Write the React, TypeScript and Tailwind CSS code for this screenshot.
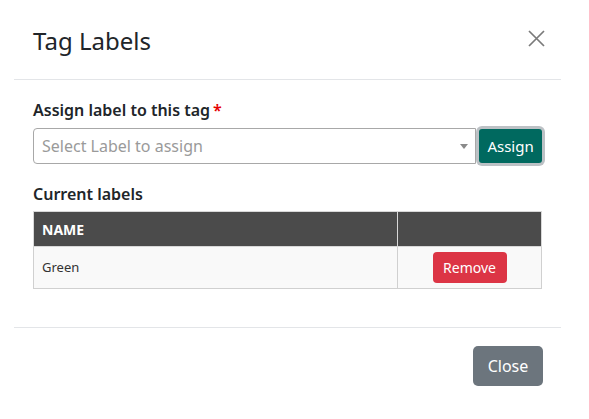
const labels = [{ name: "Green" }] as const;

export default function App() {
  return (
    <div className="h-[419px] w-full bg-white font-['Noto_Sans',_'Open_Sans',_sans-serif] text-[#212529]">
      <div className="ml-[14px] w-[547px] bg-white">
        {/* header */}
        <div className="flex h-[80px] items-center justify-between border-b border-[#e3e5e8] pl-[19px] pr-[16px] pt-[4px]">
          <h5 className="text-[24px] leading-[1.2] font-normal">Tag Labels</h5>
          <button className="mb-[7px] flex h-[18px] w-[18px] items-center justify-center">
            <svg width="17" height="17" viewBox="0 0 17 17">
              <path d="M1 1L16 16M16 1L1 16" stroke="#7a7a7a" strokeWidth="1.7" />
            </svg>
          </button>
        </div>

        {/* body */}
        <div className="px-[19px] pt-[18px] pb-[38px]">
          <p className="mb-[6px] text-[16px] leading-[24px] font-semibold">
            Assign label to this tag
            <span className="ml-[3px] text-[#e60000]">*</span>
          </p>
          <div className="flex items-center">
            <div className="flex h-[36px] w-[444px] items-center justify-between rounded-l-[4px] border border-[#a8a8a8] pl-[8px] pr-[6px]">
              <span className="text-[16px] text-[#9a9a9a]">Select Label to assign</span>
              <svg width="8" height="5" viewBox="0 0 8 5" className="mr-[1px]">
                <path d="M0 0h8L4 5z" fill="#8a8a8a" />
              </svg>
            </div>
            <button className="ml-[3px] flex h-[34px] w-[63px] items-center justify-center rounded-[3px] bg-[#00695f] text-[15px] text-white shadow-[0_0_0_3px_#bcc1c5]">
              Assign
            </button>
          </div>

          <p className="mt-[18px] mb-[5px] text-[16px] leading-[24px] font-semibold">Current labels</p>
          <table className="w-[509px] border-collapse text-left">
            <thead>
              <tr className="h-[35px] bg-[#4b4b4b] text-white">
                <th className="w-[364px] border border-[#d8d8d8] px-[8px] text-[14px] font-bold">NAME</th>
                <th className="border border-[#d8d8d8]"></th>
              </tr>
            </thead>
            <tbody>
              {labels.map((l) => (
                <tr key={l.name} className="h-[42px] bg-[#f9f9f9]">
                  <td className="border border-[#d0d0d0] px-[8px] text-[13px] text-[#333]">{l.name}</td>
                  <td className="border border-[#d0d0d0] text-center">
                    <button className="h-[31px] w-[74px] rounded-[4px] bg-[#dc3545] text-[14px] text-white">
                      Remove
                    </button>
                  </td>
                </tr>
              ))}
            </tbody>
          </table>
        </div>

        {/* footer */}
        <div className="flex justify-end border-t border-[#e3e5e8] pt-[18px] pr-[18px] pb-[16px]">
          <button className="h-[40px] w-[70px] rounded-[5px] bg-[#6c757d] text-[16px] text-white">Close</button>
        </div>
      </div>
    </div>
  );
}
